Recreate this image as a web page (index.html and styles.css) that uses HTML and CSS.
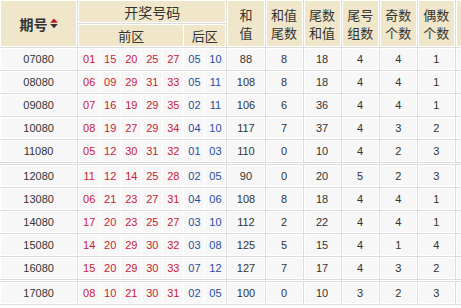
FILE: index.html
```html
<!DOCTYPE html>
<html lang="zh-CN">
<head>
<meta charset="utf-8">
<title>开奖号码</title>
<link rel="stylesheet" href="styles.css">
</head>
<body>
<table class="tbl">
  <colgroup>
    <col class="c-period"><col class="c-nums"><col class="c-std"><col class="c-std"><col class="c-std"><col class="c-std"><col class="c-std"><col class="c-std"><col class="c-std">
  </colgroup>
  <thead>
    <tr class="h1">
      <th rowspan="2" class="period-h"><span class="ph">期号<svg class="sort" width="8" height="11" viewBox="0 0 8 11"><path d="M4 0.5 L7.8 4.8 L0.2 4.8 Z" fill="#c4161c"/><path d="M0.2 6 L7.8 6 L4 10.3 Z" fill="#333"/></svg></span></th>
      <th class="draw">开奖号码</th>
      <th rowspan="2" class="two">和<br>值</th>
      <th rowspan="2" class="two">和值<br>尾数</th>
      <th rowspan="2" class="two">尾数<br>和值</th>
      <th rowspan="2" class="two">尾号<br>组数</th>
      <th rowspan="2" class="two">奇数<br>个数</th>
      <th rowspan="2" class="two">偶数<br>个数</th>
      <th rowspan="2" class="two"></th>
    </tr>
    <tr class="h2">
      <th class="zones"><div class="zone-row"><span class="zone front">前区</span><span class="zone back">后区</span></div></th>
    </tr>
  </thead>
  <tbody>
    <tr><td>07080</td><td class="nums"><div class="balls"><span class="r">01</span><span class="r">15</span><span class="r">20</span><span class="r">25</span><span class="r">27</span><span class="b">05</span><span class="b">10</span></div></td><td>88</td><td>8</td><td>18</td><td>4</td><td>4</td><td>1</td><td></td></tr>
    <tr><td>08080</td><td class="nums"><div class="balls"><span class="r">06</span><span class="r">09</span><span class="r">29</span><span class="r">31</span><span class="r">33</span><span class="b">05</span><span class="b">11</span></div></td><td>108</td><td>8</td><td>18</td><td>4</td><td>4</td><td>1</td><td></td></tr>
    <tr><td>09080</td><td class="nums"><div class="balls"><span class="r">07</span><span class="r">16</span><span class="r">19</span><span class="r">29</span><span class="r">35</span><span class="b">02</span><span class="b">11</span></div></td><td>106</td><td>6</td><td>36</td><td>4</td><td>4</td><td>1</td><td></td></tr>
    <tr><td>10080</td><td class="nums"><div class="balls"><span class="r">08</span><span class="r">19</span><span class="r">27</span><span class="r">29</span><span class="r">34</span><span class="b">04</span><span class="b">10</span></div></td><td>117</td><td>7</td><td>37</td><td>4</td><td>3</td><td>2</td><td></td></tr>
    <tr><td>11080</td><td class="nums"><div class="balls"><span class="r">05</span><span class="r">12</span><span class="r">30</span><span class="r">31</span><span class="r">32</span><span class="b">01</span><span class="b">03</span></div></td><td>110</td><td>0</td><td>10</td><td>4</td><td>2</td><td>3</td><td></td></tr>
    <tr class="gap"><td colspan="9"></td></tr>
    <tr><td>12080</td><td class="nums"><div class="balls"><span class="r">11</span><span class="r">12</span><span class="r">14</span><span class="r">25</span><span class="r">28</span><span class="b">02</span><span class="b">05</span></div></td><td>90</td><td>0</td><td>20</td><td>5</td><td>2</td><td>3</td><td></td></tr>
    <tr><td>13080</td><td class="nums"><div class="balls"><span class="r">06</span><span class="r">21</span><span class="r">23</span><span class="r">27</span><span class="r">31</span><span class="b">04</span><span class="b">06</span></div></td><td>108</td><td>8</td><td>18</td><td>4</td><td>4</td><td>1</td><td></td></tr>
    <tr><td>14080</td><td class="nums"><div class="balls"><span class="r">17</span><span class="r">20</span><span class="r">23</span><span class="r">25</span><span class="r">27</span><span class="b">03</span><span class="b">10</span></div></td><td>112</td><td>2</td><td>22</td><td>4</td><td>4</td><td>1</td><td></td></tr>
    <tr><td>15080</td><td class="nums"><div class="balls"><span class="r">14</span><span class="r">20</span><span class="r">29</span><span class="r">30</span><span class="r">32</span><span class="b">03</span><span class="b">08</span></div></td><td>125</td><td>5</td><td>15</td><td>4</td><td>1</td><td>4</td><td></td></tr>
    <tr><td>16080</td><td class="nums"><div class="balls"><span class="r">15</span><span class="r">20</span><span class="r">29</span><span class="r">30</span><span class="r">33</span><span class="b">07</span><span class="b">12</span></div></td><td>127</td><td>7</td><td>17</td><td>4</td><td>3</td><td>2</td><td></td></tr>
    <tr class="gap"><td colspan="9"></td></tr>
    <tr><td>17080</td><td class="nums"><div class="balls"><span class="r">08</span><span class="r">10</span><span class="r">21</span><span class="r">30</span><span class="r">31</span><span class="b">02</span><span class="b">05</span></div></td><td>100</td><td>0</td><td>10</td><td>3</td><td>2</td><td>3</td><td></td></tr>
  </tbody>
</table>
</body>
</html>
```
FILE: styles.css
```css
html, body {
  margin: 0;
  padding: 0;
  background: #fff;
  overflow: hidden;
}
.tbl {
  border-collapse: separate;
  border-spacing: 1px;
  background: #dcdcdc;
  table-layout: fixed;
  width: 495px;
  margin: -1px 0 0 -1px;
  font-family: "Liberation Sans", "Noto Sans CJK SC", sans-serif;
  color: #333;
}
.c-period { width: 77px; }
.c-nums { width: 148px; }
.c-std { width: 37px; }
.tbl th, .tbl td {
  box-sizing: border-box;
  border: 1px solid #fff;
  padding: 0;
  text-align: center;
  vertical-align: middle;
}
.tbl th {
  background: #f0e6c9;
  font-family: "Noto Sans CJK SC", "Liberation Sans", sans-serif;
  font-weight: normal;
  font-size: 13px;
  color: #333;
}
.h1 th { height: 23px; }
.h1 th.two, .h1 th.period-h { line-height: 18px; }
.h2 th { height: 23px; }
.draw { font-size: 14px !important; line-height: 20px; }
.period-h { font-weight: bold !important; font-size: 14px !important; }
.ph { display: inline-flex; align-items: center; gap: 2px; }
.sort { display: block; }
.zones { padding: 0; }
.zone-row { display: flex; height: 21px; gap: 1px; background: #fff; }
.zone { display: flex; align-items: center; justify-content: center; background: #f0e6c9; line-height: 1; }
.front { flex: 0 0 104px; }
.back { flex: 1 1 auto; }
.tbl td {
  background: #f7f7f7;
  height: 22px;
  font-size: 11px;
}
.tbl td.nums { padding: 0; }
.balls {
  display: flex;
  gap: 1px;
  background: #fff;
  height: 20px;
}
.balls span {
  flex: 1 1 0;
  background: #f7f7f7;
  display: flex;
  align-items: center;
  justify-content: center;
}
.r { color: #c81b36; }
.b { color: #1f4e9e; }
.gap td {
  height: 1px;
  padding: 0;
  border: 0;
  background: #fff;
  font-size: 0;
  line-height: 0;
}
```
